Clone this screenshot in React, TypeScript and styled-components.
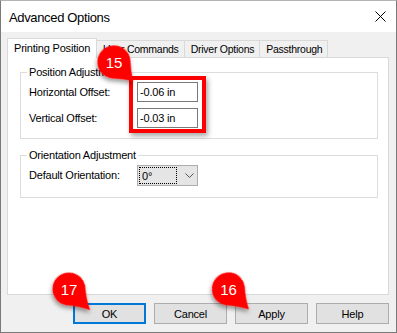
import styled, { createGlobalStyle } from "styled-components";

const GlobalStyle = createGlobalStyle`
  html, body {
    margin: 0;
    padding: 0;
    background: #ffffff;
  }
  * {
    box-sizing: border-box;
  }
`;

const Window = styled.div`
  position: relative;
  width: 397px;
  height: 333px;
  display: flex;
  flex-direction: column;
  border: 1px solid #7a7a7a;
  border-top-color: #b4b4b4;
  font-family: "Liberation Sans", Arial, sans-serif;
  font-size: 11px;
  letter-spacing: -0.2px;
  color: #000;
  overflow: hidden;
`;

const TitleBar = styled.div`
  height: 31px;
  flex-shrink: 0;
  display: flex;
  align-items: center;
  justify-content: space-between;
  padding: 0 10px 0 8px;
  background: #ffffff;
`;

const Title = styled.span`
  font-size: 13px;
  letter-spacing: -0.35px;
  padding-top: 1px;
`;

const CloseIcon = styled.svg`
  width: 11px;
  height: 11px;
  margin-top: -1px;
`;

const Body = styled.div`
  flex: 1;
  display: flex;
  flex-direction: column;
  background: #f0f0f0;
  padding: 6px 7px 8px 6px;
`;

const TabStrip = styled.div`
  height: 19px;
  display: flex;
  align-items: flex-end;
  position: relative;
  z-index: 1;
`;

const Tab = styled.div<{ $active?: boolean }>`
  height: ${(p) => (p.$active ? "20px" : "17px")};
  margin-bottom: ${(p) => (p.$active ? "-1px" : "0")};
  margin-left: ${(p) => (p.$active ? "0" : "-1px")};
  padding: ${(p) => (p.$active ? "0 6px 2px 6px" : "0 5px 0 6px")};
  font-size: ${(p) => (p.$active ? "11px" : "10.5px")};
  letter-spacing: ${(p) => (p.$active ? "-0.2px" : "-0.25px")};
  display: flex;
  align-items: center;
  background: ${(p) => (p.$active ? "#ffffff" : "#f0f0f0")};
  border: 1px solid #d9d9d9;
  border-bottom: none;
  white-space: nowrap;
`;

const Panel = styled.div`
  flex: 1;
  background: #ffffff;
  border: 1px solid #d9d9d9;
  padding: 8px 10px 0 12px;
`;

const Group = styled.fieldset<{ $gap?: number }>`
  margin: ${(p) => p.$gap ?? 0}px 0 0 0;
  padding: 0 8px ${(p) => (p.$gap ? 11 : 10)}px 8px;
  border: 1px solid #dcdcdc;
  min-width: 0;
`;

const Legend = styled.legend`
  padding: 0 2px;
  margin-left: -2px;
  line-height: 13px;
  font-size: 11px;
`;

const Rows = styled.div`
  display: flex;
  padding-top: 3px;
`;

const LabelColumn = styled.div`
  width: 108px;
  display: flex;
  flex-direction: column;
  gap: 6px;
`;

const Label = styled.div`
  height: 20px;
  display: flex;
  align-items: center;
  white-space: nowrap;
`;

const FieldColumn = styled.div`
  position: relative;
  display: flex;
  flex-direction: column;
  gap: 6px;

  &::after {
    content: "";
    position: absolute;
    inset: -6px -8px -5px -8px;
    border: 4px solid #ff0000;
    box-shadow: 2px 3px 5px rgba(0, 0, 0, 0.35);
    pointer-events: none;
  }
`;

const TextField = styled.input`
  width: 61px;
  height: 20px;
  border: 1px solid #7a7a7a;
  background: #ffffff;
  padding: 0 2px;
  margin: 0;
  font-family: "Liberation Sans", Arial, sans-serif;
  font-size: 11px;
  letter-spacing: -0.2px;
  color: #000;
  outline: none;
`;

const Combo = styled.div`
  width: 61px;
  height: 21px;
  display: flex;
  align-items: center;
  padding: 1px;
  border: 1px solid #adadad;
  background: #e5e5e5;
`;

const FocusBox = styled.div`
  width: 38px;
  height: 17px;
  display: flex;
  align-items: center;
  padding-left: 2px;
  border: 1px dotted #000;
`;

const Chevron = styled.svg`
  width: 9px;
  height: 5px;
  margin-left: 8px;
`;

const ButtonRow = styled.div`
  display: flex;
  justify-content: flex-end;
  gap: 8px;
  margin-top: 8px;
`;

const Button = styled.button<{ $default?: boolean }>`
  width: 73px;
  height: 21px;
  margin: 0;
  padding: 0;
  background: #e1e1e1;
  border: ${(p) => (p.$default ? "2px solid #0078d7" : "1px solid #adadad")};
  font-family: "Liberation Sans", Arial, sans-serif;
  font-size: 11px;
  letter-spacing: -0.2px;
  color: #000;
`;

const Overlay = styled.svg`
  position: absolute;
  left: -1px;
  top: -1px;
  z-index: 5;
  width: 397px;
  height: 333px;
  pointer-events: none;
`;

type CalloutProps = { x: number; y: number; label: string; tail?: number };

const Callout = ({ x, y, label, tail = 28 }: CalloutProps) => {
  const r = 16.5;
  const t = Math.acos(r / tail);
  const px = (r * Math.cos(t)).toFixed(2);
  const py = (r * Math.sin(t)).toFixed(2);
  const d = `M ${px} -${py} A ${r} ${r} 0 1 0 ${px} ${py} Q 19 5 ${tail} 0 Q 19 -5 ${px} -${py} Z`;
  return (
    <g>
      <path d={d} fill="#ff0000" filter="url(#pinShadow)" transform={`translate(${x} ${y}) rotate(45)`} />
      <text
        x={x}
        y={y + 5.5}
        textAnchor="middle"
        fill="#ffffff"
        fontSize="15"
        fontFamily="'Liberation Sans', Arial, sans-serif"
      >
        {label}
      </text>
    </g>
  );
};

const App = () => {
  return (
    <>
      <GlobalStyle />
      <Window>
        <TitleBar>
          <Title>Advanced Options</Title>
          <CloseIcon viewBox="0 0 11 11">
            <path d="M0.5 0.5 L10.5 10.5 M10.5 0.5 L0.5 10.5" stroke="#000" strokeWidth="1" />
          </CloseIcon>
        </TitleBar>
        <Body>
          <TabStrip>
            <Tab $active>Printing Position</Tab>
            <Tab>User Commands</Tab>
            <Tab>Driver Options</Tab>
            <Tab>Passthrough</Tab>
          </TabStrip>
          <Panel>
            <Group>
              <Legend>Position Adjustment</Legend>
              <Rows>
                <LabelColumn>
                  <Label>Horizontal Offset:</Label>
                  <Label>Vertical Offset:</Label>
                </LabelColumn>
                <FieldColumn>
                  <TextField readOnly value="-0.06 in" />
                  <TextField readOnly value="-0.03 in" />
                </FieldColumn>
              </Rows>
            </Group>
            <Group $gap={10}>
              <Legend>Orientation Adjustment</Legend>
              <Rows>
                <LabelColumn>
                  <Label>Default Orientation:</Label>
                </LabelColumn>
                <Combo>
                  <FocusBox>0°</FocusBox>
                  <Chevron viewBox="0 0 9 5">
                    <polyline points="0.5,0.5 4.5,4.5 8.5,0.5" fill="none" stroke="#555" strokeWidth="1" />
                  </Chevron>
                </Combo>
              </Rows>
            </Group>
          </Panel>
          <ButtonRow>
            <Button $default>OK</Button>
            <Button>Cancel</Button>
            <Button>Apply</Button>
            <Button>Help</Button>
          </ButtonRow>
        </Body>
        <Overlay viewBox="0 0 397 333">
          <defs>
            <filter id="pinShadow" x="-50%" y="-50%" width="200%" height="200%">
              <feDropShadow dx="1.5" dy="2.5" stdDeviation="2" floodColor="#000" floodOpacity="0.4" />
            </filter>
          </defs>
          <Callout x={114} y={62} label="15" tail={27} />
          <Callout x={69} y={289} label="17" tail={30} />
          <Callout x={228.5} y={289} label="16" tail={29} />
        </Overlay>
      </Window>
    </>
  );
};

export default App;
